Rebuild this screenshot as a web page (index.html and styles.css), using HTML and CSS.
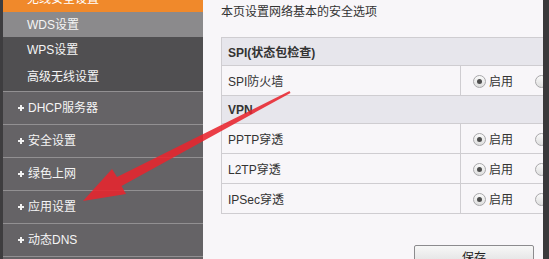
FILE: index.html
```html
<!DOCTYPE html>
<html lang="zh">
<head>
<meta charset="utf-8">
<link rel="stylesheet" href="styles.css">
</head>
<body>
<div class="page">
  <nav class="sidebar">
    <div class="sub sub-active">无线安全设置</div>
    <div class="sub sub-hover">WDS设置</div>
    <div class="sub">WPS设置</div>
    <div class="sub">高级无线设置</div>
    <div class="item"><span class="plus"></span>DHCP服务器</div>
    <div class="item"><span class="plus"></span>安全设置</div>
    <div class="item"><span class="plus"></span>绿色上网</div>
    <div class="item"><span class="plus"></span>应用设置</div>
    <div class="item"><span class="plus"></span>动态DNS</div>
    <div class="item"></div>
  </nav>
  <main class="content">
    <p class="intro">本页设置网络基本的安全选项</p>
    <table class="grid">
      <colgroup><col class="c1"><col class="c2"></colgroup>
      <tr class="head"><td colspan="2">SPI(状态包检查)</td></tr>
      <tr><td class="label">SPI防火墙</td><td class="opts"><span class="radio on"></span>启用<span class="radio gap"></span>禁用</td></tr>
      <tr class="head"><td colspan="2">VPN</td></tr>
      <tr><td class="label">PPTP穿透</td><td class="opts"><span class="radio on"></span>启用<span class="radio gap"></span>禁用</td></tr>
      <tr><td class="label">L2TP穿透</td><td class="opts"><span class="radio on"></span>启用<span class="radio gap"></span>禁用</td></tr>
      <tr><td class="label">IPSec穿透</td><td class="opts"><span class="radio on"></span>启用<span class="radio gap"></span>禁用</td></tr>
    </table>
    <div class="actions"><button class="btn">保存</button></div>
  </main>
</div>
<svg class="arrow" width="549" height="259" viewBox="0 0 549 259">
  <polygon points="83,201 126,194 121.5,186 290.5,93 289.5,91 117,177 112,169" fill="#e8242e" fill-opacity="0.88"/>
</svg>
</body>
</html>
```
FILE: styles.css
```css
html, body {
  margin: 0;
  padding: 0;
}
body {
  width: 549px;
  height: 259px;
  overflow: hidden;
  background: #3a393b;
  font-family: "Liberation Sans", "Noto Sans CJK SC", sans-serif;
  font-size: 12px;
  position: relative;
}
.page {
  display: flex;
  height: 259px;
  overflow: hidden;
}
.sidebar {
  width: 200px;
  flex: none;
  border-left: 3px solid #3e3d3f;
  background: #656366;
  display: flex;
  flex-direction: column;
  margin-top: -12px;
  color: #f5f5f5;
}
.sub {
  height: 27px;
  line-height: 27px;
  padding-left: 24px;
  background: #504f51;
  flex: none;
}
.sub-active {
  height: 24px;
  line-height: 22px;
  background: #f0892b;
  color: #fff;
}
.sub-hover {
  height: 25px;
  line-height: 27px;
  background: #8b8a8c;
}
.item {
  height: 32px;
  line-height: 32px;
  border-top: 1px solid #929092;
  padding-left: 15px;
  display: flex;
  align-items: center;
  flex: none;
}
.plus {
  position: relative;
  width: 6px;
  height: 6px;
  margin-right: 4px;
}
.plus::before, .plus::after {
  content: "";
  position: absolute;
  background: #f2f2f2;
}
.plus::before { left: 0; top: 2px; width: 6px; height: 2px; }
.plus::after { left: 2px; top: 0; width: 2px; height: 6px; }
.content {
  width: 322px;
  flex: none;
  background: #f8f6f9;
  padding-left: 18px;
  overflow: hidden;
  color: #333;
}
.intro {
  margin: 0;
  height: 24px;
  line-height: 24px;
}
.grid {
  margin-top: 13px;
  width: 360px;
  border-collapse: collapse;
  border: 1px solid #c9c7cb;
  table-layout: fixed;
}
.grid .c1 { width: 239px; }
.grid .c2 { width: 121px; }
.grid td {
  border: 1px solid #cfcdd1;
  padding: 0 0 0 6px;
  white-space: nowrap;
  height: 29px;
  overflow: hidden;
}
.grid .head td {
  background: #e7e6ec;
  font-weight: bold;
  height: 27px;
}
.grid td.opts {
  padding-left: 12px;
  vertical-align: middle;
}
.radio {
  display: inline-block;
  width: 11px;
  height: 11px;
  border: 1px solid #a9a8ab;
  border-radius: 50%;
  background: linear-gradient(#fafafa, #dedede);
  vertical-align: -2px;
  margin-right: 3px;
  position: relative;
}
.radio.on::after {
  content: "";
  position: absolute;
  left: 3px;
  top: 3px;
  width: 5px;
  height: 5px;
  border-radius: 50%;
  background: #4d4d4d;
}
.radio.gap {
  margin-left: 22px;
}
.actions {
  margin-top: 31px;
  padding-left: 193px;
}
.btn {
  width: 120px;
  height: 26px;
  border: 1px solid #8c8b8e;
  border-radius: 2px;
  background: linear-gradient(#f7f7f7, #d9d9da);
  font-family: "Liberation Sans", "Noto Sans CJK SC", sans-serif;
  font-size: 12px;
  color: #222;
  padding: 0;
  line-height: 22px;
}
.arrow {
  position: absolute;
  left: 0;
  top: 0;
  pointer-events: none;
}
```
